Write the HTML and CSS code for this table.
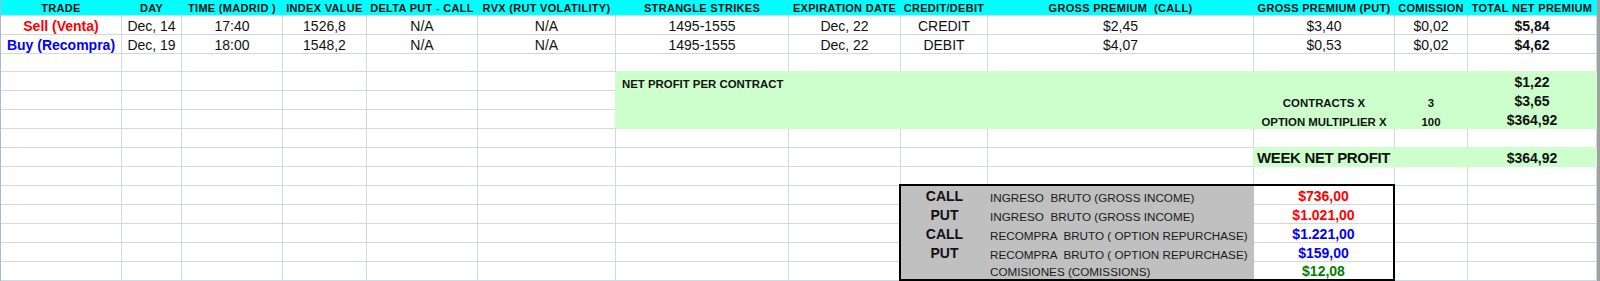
FILE: index.html
```html
<!DOCTYPE html>
<html lang="es">
<head>
<meta charset="utf-8">
<title>Strangle trade sheet</title>
<link rel="stylesheet" href="styles.css">
</head>
<body>
<div class="sheet">
  <!-- header -->
  <div class="c h">TRADE</div>
  <div class="c h">DAY</div>
  <div class="c h">TIME (MADRID )</div>
  <div class="c h">INDEX VALUE</div>
  <div class="c h">DELTA PUT - CALL</div>
  <div class="c h">RVX (RUT VOLATILITY)</div>
  <div class="c h">STRANGLE STRIKES</div>
  <div class="c h">EXPIRATION DATE</div>
  <div class="c h">CREDIT/DEBIT</div>
  <div class="c h pre">GROSS PREMIUM  (CALL)</div>
  <div class="c h">GROSS PREMIUM (PUT)</div>
  <div class="c h">COMISSION</div>
  <div class="c h">TOTAL NET PREMIUM</div>

  <!-- row 1 -->
  <div class="c b red">Sell (Venta)</div>
  <div class="c">Dec, 14</div>
  <div class="c">17:40</div>
  <div class="c">1526,8</div>
  <div class="c">N/A</div>
  <div class="c">N/A</div>
  <div class="c">1495-1555</div>
  <div class="c">Dec, 22</div>
  <div class="c">CREDIT</div>
  <div class="c">$2,45</div>
  <div class="c">$3,40</div>
  <div class="c">$0,02</div>
  <div class="c b">$5,84</div>

  <!-- row 2 -->
  <div class="c b blue">Buy (Recompra)</div>
  <div class="c">Dec, 19</div>
  <div class="c">18:00</div>
  <div class="c">1548,2</div>
  <div class="c">N/A</div>
  <div class="c">N/A</div>
  <div class="c">1495-1555</div>
  <div class="c">Dec, 22</div>
  <div class="c">DEBIT</div>
  <div class="c">$4,07</div>
  <div class="c">$0,53</div>
  <div class="c">$0,02</div>
  <div class="c b">$4,62</div>

  <!-- row 3 -->
  <div class="c"></div><div class="c"></div><div class="c"></div><div class="c"></div><div class="c"></div><div class="c"></div>
  <div class="c gb"></div><div class="c gb"></div><div class="c gb"></div><div class="c gb"></div><div class="c gb"></div><div class="c gb"></div><div class="c gb"></div>

  <!-- row 4 -->
  <div class="c"></div><div class="c"></div><div class="c"></div><div class="c"></div><div class="c"></div><div class="c gr"></div>
  <div class="c g l lbl span6">NET PROFIT PER CONTRACT</div>
  <div class="c g b">$1,22</div>

  <!-- row 5 -->
  <div class="c"></div><div class="c"></div><div class="c"></div><div class="c"></div><div class="c"></div><div class="c gr"></div>
  <div class="c g span4"></div>
  <div class="c g lbl">CONTRACTS X</div>
  <div class="c g lbl">3</div>
  <div class="c g b">$3,65</div>

  <!-- row 6 -->
  <div class="c"></div><div class="c"></div><div class="c"></div><div class="c"></div><div class="c"></div><div class="c gr"></div>
  <div class="c g span4"></div>
  <div class="c g lbl">OPTION MULTIPLIER X</div>
  <div class="c g lbl">100</div>
  <div class="c g b">$364,92</div>

  <!-- row 7 -->
  <div class="c"></div><div class="c"></div><div class="c"></div><div class="c"></div><div class="c"></div><div class="c"></div>
  <div class="c"></div><div class="c"></div><div class="c"></div><div class="c"></div>
  <div class="c gb"></div><div class="c gb"></div><div class="c gb"></div>

  <!-- row 8 -->
  <div class="c"></div><div class="c"></div><div class="c"></div><div class="c"></div><div class="c"></div><div class="c"></div>
  <div class="c"></div><div class="c"></div><div class="c"></div><div class="c gr"></div>
  <div class="c g b l week">WEEK NET PROFIT</div>
  <div class="c g"></div>
  <div class="c g b">$364,92</div>

  <!-- row 9 -->
  <div class="c"></div><div class="c"></div><div class="c"></div><div class="c"></div><div class="c"></div><div class="c"></div>
  <div class="c"></div><div class="c"></div><div class="c"></div><div class="c"></div><div class="c"></div><div class="c"></div><div class="c"></div>

  <!-- rows 10-14 (box placed explicitly) -->
  <div class="c"></div><div class="c"></div><div class="c"></div><div class="c"></div><div class="c"></div><div class="c"></div><div class="c"></div><div class="c"></div>
  <div class="c"></div><div class="c"></div>
  <div class="c"></div><div class="c"></div><div class="c"></div><div class="c"></div><div class="c"></div><div class="c"></div><div class="c"></div><div class="c"></div>
  <div class="c"></div><div class="c"></div>
  <div class="c"></div><div class="c"></div><div class="c"></div><div class="c"></div><div class="c"></div><div class="c"></div><div class="c"></div><div class="c"></div>
  <div class="c"></div><div class="c"></div>
  <div class="c"></div><div class="c"></div><div class="c"></div><div class="c"></div><div class="c"></div><div class="c"></div><div class="c"></div><div class="c"></div>
  <div class="c"></div><div class="c"></div>
  <div class="c"></div><div class="c"></div><div class="c"></div><div class="c"></div><div class="c"></div><div class="c"></div><div class="c"></div><div class="c"></div>
  <div class="c"></div><div class="c"></div>

  <div class="box">
    <div class="bx kind">CALL</div>
    <div class="bx desc">INGRESO  BRUTO (GROSS INCOME)</div>
    <div class="bv red">$736,00</div>
    <div class="bx kind">PUT</div>
    <div class="bx desc">INGRESO  BRUTO (GROSS INCOME)</div>
    <div class="bv red">$1.021,00</div>
    <div class="bx kind">CALL</div>
    <div class="bx desc">RECOMPRA  BRUTO ( OPTION REPURCHASE)</div>
    <div class="bv blue">$1.221,00</div>
    <div class="bx kind">PUT</div>
    <div class="bx desc">RECOMPRA  BRUTO ( OPTION REPURCHASE)</div>
    <div class="bv blue">$159,00</div>
    <div class="bx kind"></div>
    <div class="bx desc">COMISIONES (COMISSIONS)</div>
    <div class="bv green last">$12,08</div>
  </div>
</div>
</body>
</html>
```

FILE: styles.css
```css
html, body {
  margin: 0;
  padding: 0;
  background: #ffffff;
}

body {
  width: 1600px;
  height: 281px;
  overflow: hidden;
  font-family: "Liberation Sans", Arial, sans-serif;
  color: #111111;
}

.sheet {
  display: grid;
  width: 1600px;
  height: 281px;
  box-sizing: border-box;
  border-left: 1px solid #a9b9d3;
  border-right: 3px solid #a0a0a0;
  grid-template-columns: 121px 60px 101px 84px 111px 138px 173px 112px 87px 266px 141px 73px 129px;
  grid-template-rows: 16px 19px 19px 18px repeat(11, 19px);
  overflow: hidden;
}

.c {
  display: flex;
  align-items: flex-end;
  justify-content: center;
  border-right: 1px solid #d0d7e5;
  border-bottom: 1px solid #d0d7e5;
  font-size: 14px;
  line-height: normal;
  white-space: nowrap;
  min-width: 0;
}

.h {
  background: #00ffff;
  border-right-color: #00ffff;
  font-size: 11px;
  font-weight: bold;
  letter-spacing: 0.3px;
  padding-bottom: 1px;
}

.pre {
  white-space: pre;
}

.b {
  font-weight: bold;
}

.red { color: #ff0000; }
.blue { color: #0000ff; }
.green { color: #008000; }

.g {
  background: #ccffcc;
  border-color: #ccffcc;
}

.gb { border-bottom-color: #ccffcc; }
.gr { border-right-color: #ccffcc; }

.span6 { grid-column: span 6; }
.span4 { grid-column: span 4; }

.l {
  justify-content: flex-start;
  padding-left: 6px;
}

.lbl {
  font-size: 11.4px;
  font-weight: bold;
}

.week {
  padding-left: 3px;
  font-size: 15px;
  letter-spacing: -0.35px;
}

/* bordered summary box */
.box {
  grid-column: 9 / 12;
  grid-row: 11 / 16;
  margin: -2px 0 0 -2px;
  border: 2px solid #000000;
  display: grid;
  grid-template-columns: 87px 266px 1fr;
  grid-template-rows: repeat(4, 19px) 1fr;
  background: #ffffff;
}

.bx {
  background: #c0c0c0;
  border-bottom: 1px solid #c0c0c0;
  display: flex;
  align-items: flex-end;
  white-space: pre;
}

.kind {
  justify-content: center;
  font-size: 14px;
  font-weight: bold;
}

.desc {
  padding-left: 2px;
  font-size: 11.7px;
  color: #1a1a1a;
}

.bv {
  display: flex;
  align-items: flex-end;
  justify-content: center;
  border-bottom: 1px solid #d0d7e5;
  font-size: 14px;
  font-weight: bold;
}

.bv.last {
  border-bottom: none;
}
```
